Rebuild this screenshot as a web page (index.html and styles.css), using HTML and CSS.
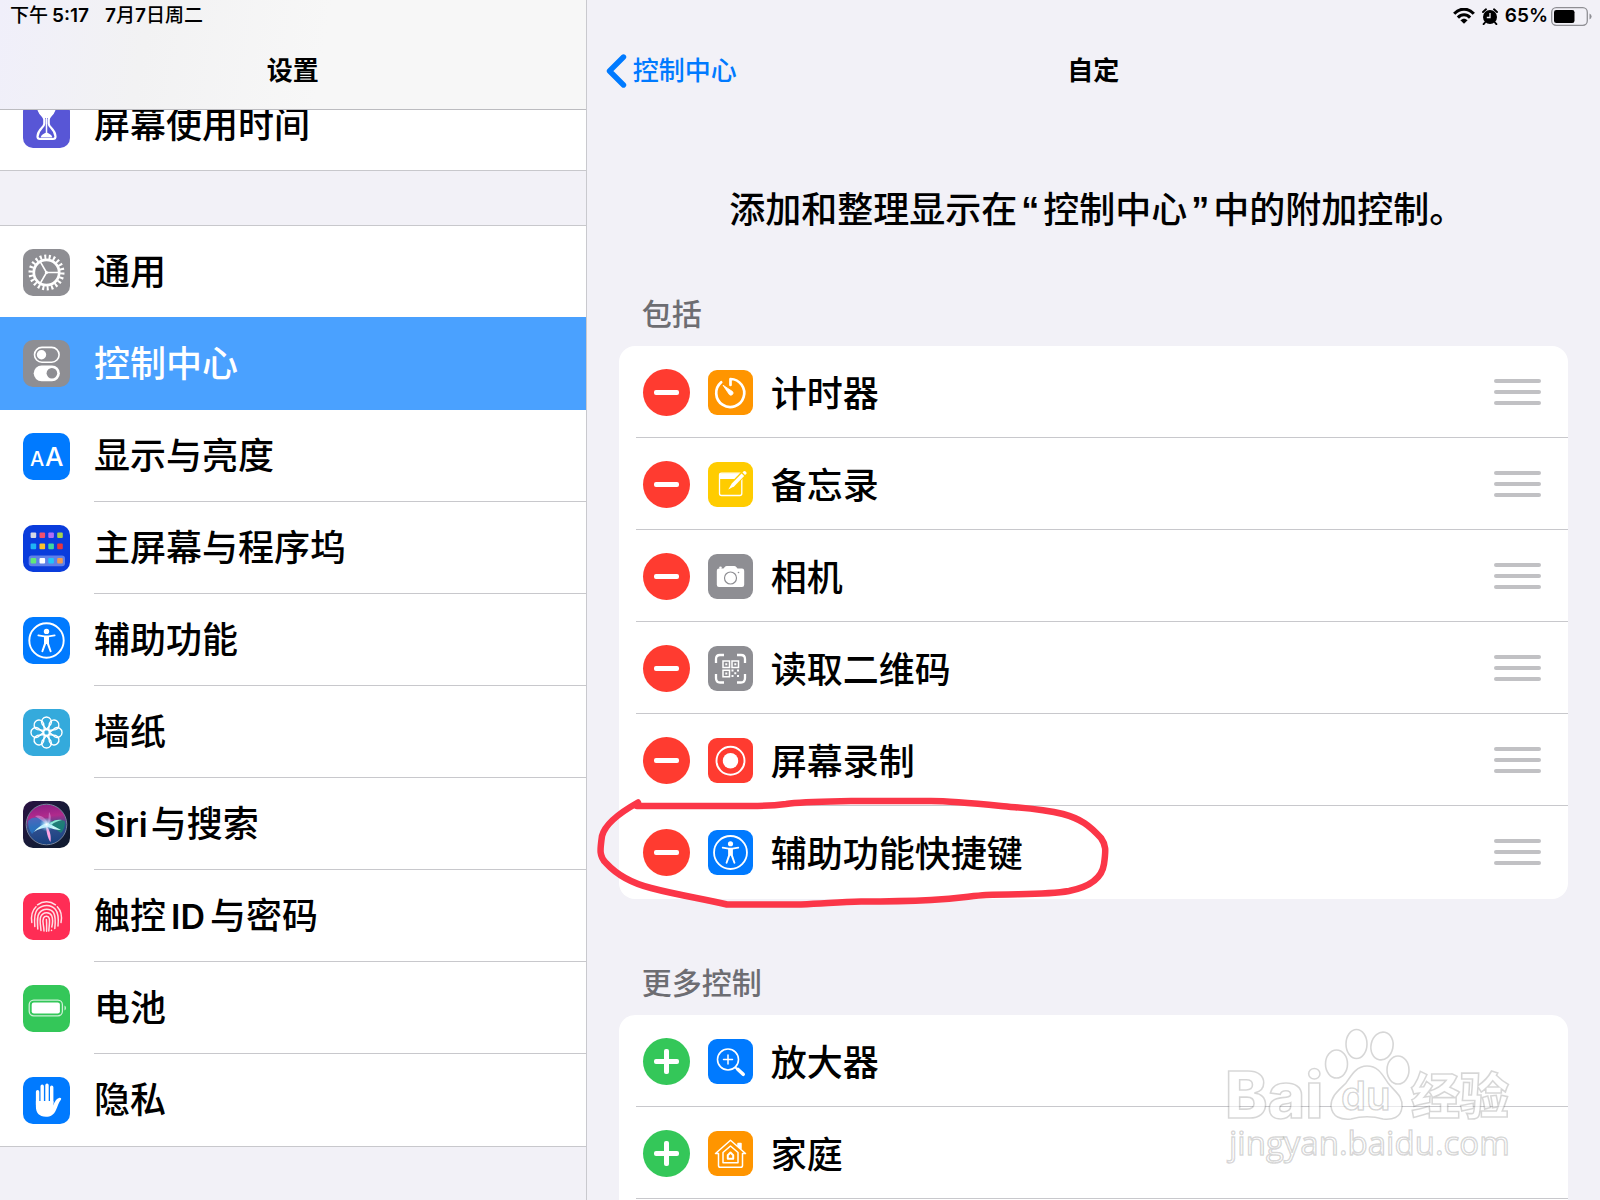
FILE: index.html
```
<!DOCTYPE html>
<html lang="zh-CN">
  <head>
    <meta charset="UTF-8" />
    <meta name="viewport" content="width=device-width, initial-scale=1.0" />
    <title>设置</title>
    <link rel="stylesheet" href="styles.css">
  </head>
  <body>
    <!-- shared shapes -->
    <svg class="defs" aria-hidden="true">
      <symbol id="person" viewBox="0 0 47 47">
        <circle cx="23.5" cy="23.5" r="17.2" fill="none" stroke="#fff" stroke-width="1.9" />
        <circle cx="23.5" cy="14.4" r="2.7" fill="#fff" />
        <path d="M15.3 18.4L21.5 19.4H25.5L31.7 18.4" fill="none" stroke="#fff" stroke-width="1.7" stroke-linecap="round" stroke-linejoin="round" />
        <path d="M21 19h5v7.5l2.6 7.7a1 1 0 0 1-1.8.6L23.9 27h-.8L20.2 34.8a1 1 0 0 1-1.8-.6l2.6-7.7z" fill="#fff" />
      </symbol>
    </svg>

    <div class="settings">
      <aside class="sidebar">
        <header class="sidebar-header">
          <div class="status-bar">
            <span>下午<b class="time">5:17</b></span>
            <span><b>7</b>月<b>7</b>日周二</span>
          </div>
          <h1 class="nav-title">设置</h1>
        </header>

        <nav class="menu">
          <div class="menu-group">
            <a class="menu-row" href="#screen-time">
              <svg class="icon purple" viewBox="0 0 47 47">
                <path d="M15 5C15 14 21.3 14 21.3 18.5V22.5C21.3 27 15 27.5 14.5 35.5Q14.5 38 17 38H30Q32.5 38 32.5 35.5C32 27.5 25.7 27 25.7 22.5V18.5C25.7 14 32 14 32 5Z" fill="none" stroke="#fff" stroke-width="2.2" />
                <path d="M15 6H32C32 12 29 14 26 17H21C18 14 15 12 15 6Z" fill="#fff" />
                <path d="M23.5 17V33" stroke="#fff" stroke-width="1.5" />
                <path d="M17.5 36.5C18.5 33.5 21 32.5 23.5 31.5C26 32.5 28.5 33.5 29.5 36.5Z" fill="#fff" />
              </svg>
              <span class="label">屏幕使用时间</span>
            </a>
          </div>

          <div class="menu-group">
            <a class="menu-row" href="#general">
              <svg class="icon grey" viewBox="0 0 47 47" fill="none" stroke="#fff">
                <circle cx="23.5" cy="23.5" r="12.7" stroke-width="2.7" />
                <circle cx="23.5" cy="23.5" r="15.8" stroke-width="4.4" pathLength="44" stroke-dasharray="0.9 1.1" />
                <path d="M23.5 23.5H36M23.5 23.5L17.2 12.7M23.5 23.5L17.2 34.3" stroke-width="1.6" />
                <circle cx="23.5" cy="23.5" r="1.6" fill="#fff" stroke="none" />
              </svg>
              <span class="label">通用</span>
            </a>
            <a class="menu-row active" href="#control-center">
              <svg class="icon grey" viewBox="0 0 47 47">
                <rect x="11.5" y="7.4" width="24.6" height="14.8" rx="7.4" fill="none" stroke="#fff" stroke-width="1.6" />
                <circle cx="18.5" cy="14.8" r="4.7" fill="#fff" />
                <rect x="10.7" y="25.4" width="26.2" height="15.8" rx="7.9" fill="#fff" />
                <circle cx="28.9" cy="33.3" r="5.3" fill="#8e8e93" />
              </svg>
              <span class="label">控制中心</span>
            </a>
            <a class="menu-row" href="#display">
              <svg class="icon blue" viewBox="0 0 47 47">
                <text class="icon-text" x="7" y="33" font-size="20">A</text>
                <text class="icon-text" x="22" y="33" font-size="26">A</text>
              </svg>
              <span class="label">显示与亮度</span>
            </a>
            <a class="menu-row" href="#home-screen">
              <svg class="icon navy" viewBox="0 0 47 47">
                <rect x="5.7" y="30.6" width="36.3" height="10.6" rx="3" fill="#fff" fill-opacity=".35" />
                <rect x="7.6" y="7.4" width="5.6" height="5.6" rx="1" fill="#d5d9e4" />
                <rect x="16.5" y="7.4" width="5.6" height="5.6" rx="1" fill="#f2506e" />
                <rect x="25.3" y="7.4" width="5.6" height="5.6" rx="1" fill="#b06cf5" />
                <rect x="34.2" y="7.4" width="5.6" height="5.6" rx="1" fill="#a5d24c" />
                <rect x="7.6" y="18.6" width="5.6" height="5.6" rx="1" fill="#1fb4f5" />
                <rect x="16.5" y="18.6" width="5.6" height="5.6" rx="1" fill="#fbc32c" />
                <rect x="25.3" y="18.6" width="5.6" height="5.6" rx="1" fill="#3ed6a0" />
                <rect x="34.2" y="18.6" width="5.6" height="5.6" rx="1" fill="#e8353f" />
                <rect x="7.6" y="33" width="5.6" height="5.6" rx="1" fill="#62e878" />
                <rect x="16.5" y="33" width="5.6" height="5.6" rx="1" fill="#fff" />
                <rect x="25.3" y="33" width="5.6" height="5.6" rx="1" fill="#1fc6fa" />
                <rect x="34.2" y="33" width="5.6" height="5.6" rx="1" fill="#f39a4c" />
              </svg>
              <span class="label">主屏幕与程序坞</span>
            </a>
            <a class="menu-row" href="#accessibility">
              <svg class="icon blue" viewBox="0 0 47 47"><use href="#person" /></svg>
              <span class="label">辅助功能</span>
            </a>
            <a class="menu-row" href="#wallpaper">
              <svg class="icon cyan" viewBox="-23.5 -23.5 47 47" fill="none" stroke="#fff" stroke-width="1.4">
                <circle r="3" />
                <path id="petal" d="M0 -3L-4.4 -8.5A4.9 4.9 0 1 1 4.4 -8.5Z" />
                <use href="#petal" transform="rotate(45)" />
                <use href="#petal" transform="rotate(90)" />
                <use href="#petal" transform="rotate(135)" />
                <use href="#petal" transform="rotate(180)" />
                <use href="#petal" transform="rotate(225)" />
                <use href="#petal" transform="rotate(270)" />
                <use href="#petal" transform="rotate(315)" />
              </svg>
              <span class="label">墙纸</span>
            </a>
            <a class="menu-row" href="#siri">
              <svg class="icon siri" viewBox="0 0 47 47">
                <defs>
                  <linearGradient id="orb" x1=".4" y1="0" x2=".5" y2="1">
                    <stop offset="0" stop-color="#8c1f85" />
                    <stop offset=".3" stop-color="#b02a8c" />
                    <stop offset=".55" stop-color="#33508f" />
                    <stop offset="1" stop-color="#17407f" />
                  </linearGradient>
                  <radialGradient id="glow">
                    <stop offset="0" stop-color="#fff" />
                    <stop offset=".4" stop-color="#bdeaff" stop-opacity=".7" />
                    <stop offset="1" stop-color="#7fd8ff" stop-opacity="0" />
                  </radialGradient>
                </defs>
                <circle cx="23.5" cy="23.5" r="20.3" fill="url(#orb)" stroke="#75839b" stroke-width="1" />
                <path d="M5 20c6-6 14-4 18 4-7 1-10 5-14 9-3-4-4-8-4-13z" fill="#2a7fd0" fill-opacity=".7" />
                <path d="M24 23c5-4 13-5 18-3 0 5-1 9-4 12-4-3-9-6-14-9z" fill="#178a72" fill-opacity=".8" />
                <path d="M12 15c6-2 11 2 13 8l1-12c3 4 2 9-1 13z" fill="#e0a6e8" fill-opacity=".5" />
                <path d="M23 24c3 4 5.5 9 4.5 17-2.5-3-4.5-11-4.5-17z" fill="#ffa5e4" />
                <path d="M11 31c3-4 8-8 14-9l13 7c-5 0-9-1-13-3-5 1-10 2-14 5z" fill="#c9f6fa" />
                <path d="M27 22c4-3 8-4 12-3-4 1-7 2-11 5z" fill="#8ce6d4" />
                <circle cx="23.5" cy="23.5" r="7" fill="url(#glow)" />
              </svg>
              <span class="label"><b class="latin first">Siri</b>与搜索</span>
            </a>
            <a class="menu-row" href="#touch-id">
              <svg class="icon pink" viewBox="0 0 47 47" fill="none" stroke="#fff" stroke-opacity=".85" stroke-width="1.5" stroke-linecap="round">
                <path d="M14.5 11.8A15 15 0 0 1 32.5 11.8" />
                <path d="M8.8 29.5C7.8 22 9.5 17 13 13.7M34.3 13.7C37.5 17 39.5 22 38 29.5" />
                <path d="M11.8 33.5C11 24 11.5 19.5 14.5 16.3C20 11 28 11.3 32.3 16.2C35.5 20 35.8 25 35 33" />
                <path d="M14.8 36C14.3 28 13.8 23.5 16.3 20C20 15 27.5 15.2 30.5 19.5C33 23.5 32.5 29 31.8 35.5" />
                <path d="M18 37.5C17.5 31 16.3 27 17.8 23.5C20 18.8 26.8 18.5 28.8 23C30.2 26.5 29.5 31 28.8 34M28.5 37.2V37.5" />
                <path d="M21 38C21 32 18.8 28.5 20.5 25C22 22.5 25.5 22.8 26.3 25.5C27 29 26 33.5 25.8 38" />
                <path d="M23.4 26.5C23.8 30 23.6 34 23.6 38.3" />
              </svg>
              <span class="label">触控<b class="latin">ID</b>与密码</span>
            </a>
            <a class="menu-row" href="#battery">
              <svg class="icon green" viewBox="0 0 47 47">
                <rect x="6.2" y="15.2" width="33.2" height="15.6" rx="4.5" fill="none" stroke="#fff" stroke-opacity=".75" stroke-width="1.3" />
                <rect x="8.7" y="17.6" width="28.2" height="10.8" rx="2.2" fill="#fff" />
                <path d="M41.5 20.5a2.8 2.8 0 0 1 0 5z" fill="#fff" fill-opacity=".75" />
              </svg>
              <span class="label">电池</span>
            </a>
            <a class="menu-row" href="#privacy">
              <svg class="icon blue" viewBox="0 0 47 47">
                <path d="M14.6 28V14.8M19.2 26V9.3M24 26V8.2M28.7 26V10.3" stroke="#fff" stroke-width="3.4" stroke-linecap="round" />
                <path d="M12.9 24H30.4V28.5C31.5 25 33.5 21.5 36.5 20.8C38 20.6 38.6 21.7 37.9 22.7C35.5 25.5 34.8 29 33 33C30.8 38 27.5 39.8 23 39.8C16 39.8 12.9 35.5 12.9 29.5Z" fill="#fff" />
              </svg>
              <span class="label">隐私</span>
            </a>
          </div>
        </nav>
      </aside>

      <main class="detail">
        <div class="status-bar status-right">
          <svg width="22" height="16" viewBox="0 0 22 16" fill="none" stroke="#000" stroke-width="3.1">
            <path d="M1.2 5.8C7-.4 15-.4 20.8 5.8M4.9 9.6C8.5 5.8 13.5 5.8 17.1 9.6" />
            <path d="M7.4 12.3C9.5 10.1 12.5 10.1 14.6 12.3L11 15.8Z" fill="#000" stroke="none" />
          </svg>
          <svg width="16" height="17" viewBox="0 0 16 17">
            <circle cx="8" cy="9" r="7" />
            <path d="M1 4L4 1.3M15 4L12 1.3M3 14.5L1.6 16.2M13 14.5L14.4 16.2" stroke="#000" stroke-width="1.9" stroke-linecap="round" />
            <path d="M8 5V9.5H4.8" fill="none" stroke="#f2f1f7" stroke-width="1.3" />
          </svg>
          <b>65%</b>
          <svg width="41" height="19" viewBox="0 0 41 19">
            <rect x=".7" y=".7" width="35.6" height="17.6" rx="4.5" fill="none" stroke="#8f8f94" stroke-width="1.3" />
            <rect x="3" y="3" width="20.5" height="13" rx="2.3" />
            <path d="M38.5 6.5a3.2 3.2 0 0 1 0 6z" fill="#8f8f94" />
          </svg>
        </div>

        <header class="detail-header">
          <a class="back" href="#control-center">
            <svg width="21" height="34" viewBox="0 0 21 34" fill="none" stroke="#007aff" stroke-width="5.4" stroke-linecap="round" stroke-linejoin="round">
              <path d="M17.5 3L3.5 17L17.5 31" />
            </svg>
            控制中心
          </a>
          <h2 class="nav-title">自定</h2>
        </header>

        <p class="intro">添加和整理显示在<span class="quote">“</span>控制中心<span class="quote">”</span>中的附加控制。</p>

        <h3 class="section-label">包括</h3>
        <ul class="card">
          <li class="control-row">
            <button class="toggle remove" type="button" aria-label="移除计时器"></button>
            <svg class="icon small orange" viewBox="0 0 45 45">
              <path d="M13.2 12.3A14 14 0 1 0 22.5 9V15" fill="none" stroke="#fff" stroke-width="2.7" stroke-linecap="round" stroke-linejoin="round" />
              <path d="M15 15.2L24.5 21.5A2.1 2.1 0 0 1 21.3 24.5Z" fill="#fff" stroke="#fff" stroke-width=".8" stroke-linejoin="round" />
            </svg>
            <span class="name">计时器</span>
            <button class="handle" type="button" aria-label="移动计时器"><i></i><i></i><i></i></button>
          </li>
          <li class="control-row">
            <button class="toggle remove" type="button" aria-label="移除备忘录"></button>
            <svg class="icon small yellow" viewBox="0 0 45 45">
              <rect x="11.5" y="11.2" width="22.3" height="22.3" rx="2" fill="none" stroke="#fff" stroke-width="1.3" />
              <path d="M11.5 11.5H33L28 17H11.5Z" fill="#fff" />
              <path d="M19.5 28.5L23 20.5L34.5 8.5L39 12.5L27 24.5Z" fill="#fc0" />
              <path d="M20.3 27.5L23.8 21.5L33.6 11.4L36.2 13.9L26.3 24.2Z" fill="#fff" />
              <path d="M34.5 10.5L35.7 9.3Q36.7 8.6 37.7 9.5L38.3 10.2Q39 11.1 38.2 12L37 13.1Z" fill="#fff" />
            </svg>
            <span class="name">备忘录</span>
            <button class="handle" type="button" aria-label="移动备忘录"><i></i><i></i><i></i></button>
          </li>
          <li class="control-row">
            <button class="toggle remove" type="button" aria-label="移除相机"></button>
            <svg class="icon small grey" viewBox="0 0 45 45">
              <path d="M11 14.5H15.5L17.2 12.6Q17.8 12 18.7 12H26.3Q27.2 12 27.8 12.6L29.5 14.5H34Q36.2 14.5 36.2 16.7V30.8Q36.2 33 34 33H11Q8.8 33 8.8 30.8V16.7Q8.8 14.5 11 14.5Z" fill="#fff" />
              <circle cx="12.5" cy="13.8" r="1.3" fill="#fff" />
              <circle cx="22.5" cy="24" r="6" fill="none" stroke="#8e8e93" stroke-width="1.2" />
              <circle cx="30.5" cy="18.5" r=".8" fill="#8e8e93" />
            </svg>
            <span class="name">相机</span>
            <button class="handle" type="button" aria-label="移动相机"><i></i><i></i><i></i></button>
          </li>
          <li class="control-row">
            <button class="toggle remove" type="button" aria-label="移除读取二维码"></button>
            <svg class="icon small grey" viewBox="0 0 45 45" fill="none" stroke="#fff">
              <path d="M8 17V13Q8 9 12 9H16M29 9H33Q37 9 37 13V17M37 28V32Q37 36.5 33 36.5H29M16 36.5H12Q8 36.5 8 32V28" stroke-width="2.3" />
              <path d="M15 15h6.5v6.5h-6.5zM24 15h6.5v6.5h-6.5zM15 24.2h6.5v6.5h-6.5z" stroke-width="1.5" />
              <path d="M17.3 17.3h2v2h-2zM26.3 17.3h2v2h-2zM17.3 26.5h2v2h-2zM23.5 23.5h2v2h-2zM29 23.5h2v2h-2zM26.3 26.3h2v2h-2zM23.5 29h2v2h-2zM29 29h2v2h-2z" fill="#fff" stroke="none" />
            </svg>
            <span class="name">读取二维码</span>
            <button class="handle" type="button" aria-label="移动读取二维码"><i></i><i></i><i></i></button>
          </li>
          <li class="control-row">
            <button class="toggle remove" type="button" aria-label="移除屏幕录制"></button>
            <svg class="icon small red" viewBox="0 0 45 45">
              <circle cx="22.5" cy="22.8" r="14" fill="none" stroke="#fff" stroke-width="1.9" />
              <circle cx="22.5" cy="22.8" r="7.7" fill="#fff" />
            </svg>
            <span class="name">屏幕录制</span>
            <button class="handle" type="button" aria-label="移动屏幕录制"><i></i><i></i><i></i></button>
          </li>
          <li class="control-row marked">
            <button class="toggle remove" type="button" aria-label="移除辅助功能快捷键"></button>
            <svg class="icon small blue" viewBox="0 0 47 47"><use href="#person" /></svg>
            <span class="name">辅助功能快捷键</span>
            <button class="handle" type="button" aria-label="移动辅助功能快捷键"><i></i><i></i><i></i></button>
            <!-- hand-drawn circle -->
            <svg class="scribble" width="530" height="130" viewBox="590 790 530 130">
              <path d="M637 802.5C620 812 604 824 601 836C599 850 598 856 605 863C616 875 630 883 650 888C680 896 705 899 726 904.5H800C830 903 840 902 860 901.5C900 901.5 910 901 930 900C960 898 970 896 985 895C1020 893.5 1045 895 1068 891C1088 887 1101 878 1103 864C1105 850 1105 845 1100 838C1088 825 1080 819 1062 814C1040 808.5 1020 808 1000 806C970 803 950 801 930 801H850C820 801.5 800 801.5 785 804C770 806 765 806 750 806H636" />
            </svg>
          </li>
        </ul>

        <h3 class="section-label">更多控制</h3>
        <ul class="card more">
          <li class="control-row">
            <button class="toggle add" type="button" aria-label="添加放大器"></button>
            <svg class="icon small blue" viewBox="0 0 45 45" fill="none" stroke="#fff" stroke-linecap="round">
              <circle cx="20" cy="20.5" r="10.5" stroke-width="1.6" />
              <path d="M20 16V25M15.5 20.5H24.5" stroke-width="1.5" />
              <path d="M27.5 28.5L30 31" stroke-width="2" />
              <path d="M30 30.5L35.2 35.3" stroke-width="3.6" />
            </svg>
            <span class="name">放大器</span>
          </li>
          <li class="control-row">
            <button class="toggle add" type="button" aria-label="添加家庭"></button>
            <svg class="icon small orange" viewBox="0 0 45 45" fill="none" stroke="#fff" stroke-width="1.5" stroke-linejoin="round">
              <path d="M10.5 22.5H7.5L22.5 9.2L37.5 22.5H34.5V34.5Q34.5 36.3 32.7 36.3H12.3Q10.5 36.3 10.5 34.5Z" />
              <path d="M30 12.5H33V17.5L30 15Z" fill="#fff" />
              <path d="M15 21.5L22.5 15L30 21.5V31.8H15Z" />
              <path d="M19.8 24.2L22.5 21.5L25.2 24.2V27.8H19.8Z" stroke-width="2" />
            </svg>
            <span class="name">家庭</span>
          </li>
        </ul>

        <!-- watermark -->
        <svg class="watermark" width="310" height="160" viewBox="1215 1020 310 160">
          <ellipse cx="1336.5" cy="1064" rx="11" ry="14" />
          <ellipse cx="1356.5" cy="1044" rx="10.5" ry="14.5" />
          <ellipse cx="1382" cy="1046" rx="11" ry="14" transform="rotate(12 1382 1046)" />
          <ellipse cx="1398" cy="1070" rx="11" ry="14" />
          <path d="M1367 1066C1378 1066 1382 1074 1388 1083C1395 1092 1403 1096 1402 1107C1401 1118 1392 1120 1383 1119C1372 1116 1362 1116 1351 1119C1341 1120 1332 1117 1331 1106C1331 1096 1338 1091 1346 1083C1352 1074 1357 1066 1367 1066Z" />
          <text class="wm-bai" x="1225" y="1118">Bai</text>
          <text class="wm-du" x="1341" y="1110">du</text>
          <text class="wm-jy" x="1411" y="1114">经验</text>
          <text class="wm-url" x="1229" y="1155">jingyan.baidu.com</text>
        </svg>
      </main>
    </div>
  </body>
</html>
```
FILE: styles.css
```
* {
  box-sizing: border-box;
}

body {
  margin: 0;
  background-color: #f2f1f7;
  color: #000;
  font-family: Inter, "Noto Sans CJK SC", sans-serif;
  font-weight: 500;
}

h1,
h2,
h3,
p,
ul {
  margin: 0;
  padding: 0;
}

a {
  color: inherit;
  text-decoration: none;
}

b {
  font-weight: 600;
}

button {
  padding: 0;
  border: none;
  background: none;
  cursor: pointer;
}

.defs {
  position: absolute;
  width: 0;
  height: 0;
}

.settings {
  display: grid;
  grid-template-columns: 11fr 19fr;
  height: 100vh;
  overflow: hidden;
}

/* status bar */
.status-bar {
  display: flex;
  align-items: center;
  gap: 16px;
  height: 32px;
  padding: 0 8px 0 10px;
  font-size: 19px;
  line-height: 32px;
}

.time {
  margin-left: 4px;
}

.status-right {
  justify-content: flex-end;
  gap: 7px;
}

.status-right b + svg {
  margin-left: -4px;
}

.nav-title {
  font-size: 26px;
  font-weight: 600;
  line-height: 40px;
  text-align: center;
}

/* sidebar */
.sidebar {
  border-right: 1px solid #c9c9ce;
  overflow: hidden;
}

.sidebar-header {
  position: relative;
  z-index: 1;
  height: 110px;
  border-bottom: 1px solid #bcbcc0;
  background: linear-gradient(100deg, #f0effa 0%, #f2f2f3 25%, #f7f7f7 55%);
}

.sidebar-header .nav-title {
  padding-top: 19px;
}

/* scrolled a little, so the first row slides under the header */
.menu {
  margin-top: -31px;
}

.menu-group {
  margin-bottom: 54px;
  background-color: #fff;
}

.menu-group + .menu-group {
  border-top: 1px solid #c8c8cc;
}

.menu-row {
  display: flex;
  align-items: center;
  height: 92px;
  padding-left: 23px;
  font-size: 36px;
}

.label {
  flex: 1;
  height: 92px;
  margin-left: 24px;
  border-bottom: 1px solid #c8c8cc;
  line-height: 93px;
}

.latin {
  margin: 0 5px;
  font-size: 34px;
}

.latin.first {
  margin: 0 3px 0 0;
}

.menu-row:last-child {
  border-bottom: 1px solid #c8c8cc;
}

.menu-row:last-child .label {
  border-bottom: none;
}

.menu-group + .menu-group .menu-row:last-child {
  height: 93px;
}

.menu-row.active {
  height: 93px;
  margin-top: -1px;
  background-color: #4aa1ff;
  color: #fff;
}

/* no separators around the selected row */
.menu-row.active .label,
.menu-row:has(+ .active) .label {
  border-color: transparent;
}

/* icons */
.icon {
  flex: none;
  width: 47px;
  height: 47px;
  border-radius: 10px;
}

.icon.small {
  width: 45px;
  height: 45px;
  border-radius: 9px;
}

.icon-text {
  fill: #fff;
  font-family: Inter, sans-serif;
  font-weight: 500;
}

.purple {
  background-color: #5856d6;
}

.grey {
  background-color: #8e8e93;
}

.blue {
  background-color: #007aff;
}

.navy {
  background-color: #0a3cdc;
}

.cyan {
  background-color: #34aadc;
}

.siri {
  background: linear-gradient(135deg, #2b1242, #141c36 60%, #101a2e);
}

.pink {
  background-color: #ff2d55;
}

.green {
  background-color: #34c759;
}

.orange {
  background-color: #ff9500;
}

.yellow {
  background-color: #ffcc00;
}

.red {
  background-color: #ff3b30;
}

/* detail pane */
.detail {
  position: relative;
  overflow: hidden;
}

.detail-header {
  display: grid;
  grid-template-columns: 1fr auto 1fr;
  align-items: center;
  height: 78px;
  padding-left: 19px;
}

.detail-header .nav-title {
  margin-left: -19px;
}

.back {
  display: flex;
  align-items: center;
  gap: 6px;
  color: #007aff;
  font-size: 26px;
  line-height: 40px;
}

.intro {
  padding: 73px 0 0 8px;
  font-size: 36px;
  line-height: 54px;
  text-align: center;
}

.quote {
  margin: 0 4px;
  font-family: "Liberation Sans", sans-serif;
  font-weight: 700;
  line-height: 1;
}

.section-label {
  padding: 55px 55px 10px;
  color: #6d6d72;
  font-size: 30px;
  font-weight: 500;
  line-height: 44px;
}

.card + .section-label {
  padding-top: 62px;
}

.card {
  margin: 0 32px;
  padding-bottom: 1px;
  border-radius: 16px;
  background-color: #fff;
  list-style: none;
}

.card.more {
  border-radius: 16px 16px 0 0;
}

.control-row {
  display: flex;
  position: relative;
  align-items: center;
  height: 92px;
  padding: 0 27px 0 24px;
}

/* inset separator */
.control-row::after {
  content: "";
  position: absolute;
  right: 0;
  bottom: 0;
  left: 17px;
  height: 1px;
  background-color: #c8c8cc;
}

.control-row.marked::after {
  display: none;
}

.toggle {
  position: relative;
  width: 47px;
  height: 47px;
  margin-right: 18px;
  border-radius: 50%;
}

.toggle::before,
.toggle.add::after {
  content: "";
  position: absolute;
  top: 21px;
  left: 11px;
  width: 25px;
  height: 5px;
  border-radius: 2px;
  background-color: #fff;
}

.toggle.add::after {
  transform: rotate(90deg);
}

.remove {
  background-color: #ff3b30;
}

.add {
  background-color: #34c759;
}

.name {
  flex: 1;
  margin-left: 18px;
  padding-bottom: 2px;
  font-size: 36px;
}

.handle {
  display: flex;
  flex-direction: column;
  gap: 7px;
  width: 47px;
}

.handle i {
  height: 4px;
  border-radius: 2px;
  background-color: #c1c1c4;
}

.scribble {
  position: absolute;
  z-index: 1;
  top: -16px;
  left: -28px;
  fill: none;
  stroke: #fb3648;
  stroke-width: 6.5;
  stroke-linecap: round;
  stroke-linejoin: round;
  pointer-events: none;
}

.watermark {
  position: absolute;
  right: 75px;
  bottom: 20px;
  fill: #fff;
  fill-opacity: 0.6;
  stroke: #000;
  stroke-opacity: 0.16;
  stroke-width: 1.6;
  pointer-events: none;
}

.wm-bai {
  font-family: Inter, sans-serif;
  font-size: 64px;
  font-weight: 800;
}

.wm-du {
  font-family: Inter, sans-serif;
  font-size: 40px;
  font-weight: 600;
}

.wm-jy {
  font-family: "Noto Sans CJK SC", sans-serif;
  font-size: 49px;
  font-weight: 900;
}

.wm-url {
  font-family: "Open Sans", sans-serif;
  font-size: 33px;
  font-weight: 500;
}
```
